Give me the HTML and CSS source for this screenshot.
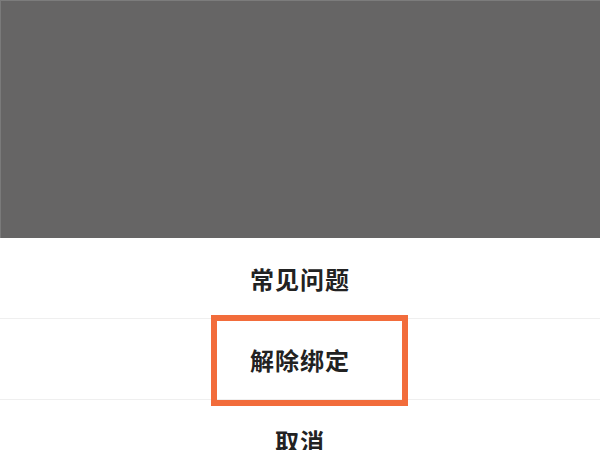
FILE: index.html
```html
<!DOCTYPE html>
<html lang="zh-CN">
<head>
<meta charset="utf-8">
<link rel="stylesheet" href="styles.css">
</head>
<body>
<div class="screen">
  <div class="overlay"></div>
  <div class="sheet">
    <div class="item">常见问题</div>
    <div class="divider"></div>
    <div class="item item-target">解除绑定<span class="highlight"></span></div>
    <div class="divider"></div>
    <div class="item">取消</div>
  </div>
</div>
</body>
</html>
```
FILE: styles.css
```css
html, body {
  margin: 0;
  padding: 0;
  background: #ffffff;
}
.screen {
  width: 600px;
  height: 450px;
  overflow: hidden;
  position: relative;
  font-family: "Noto Sans CJK SC", "Noto Sans", sans-serif;
}
.overlay {
  height: 238px;
  background: #666565;
  border-top: 1px solid #7c7c7c;
  border-left: 1px solid #7a7a7a;
  box-sizing: border-box;
}
.sheet {
  display: flex;
  flex-direction: column;
  background: #ffffff;
}
.item {
  height: 80px;
  display: flex;
  align-items: center;
  justify-content: center;
  font-size: 24px;
  font-weight: 700;
  color: #222222;
  letter-spacing: 1px;
}
.item-target {
  position: relative;
}
.divider {
  height: 1px;
  background: #efefef;
}
.highlight {
  position: absolute;
  left: 211px;
  top: -4px;
  width: 197px;
  height: 91px;
  box-sizing: border-box;
  border: 6px solid #f26c3b;
}
```
